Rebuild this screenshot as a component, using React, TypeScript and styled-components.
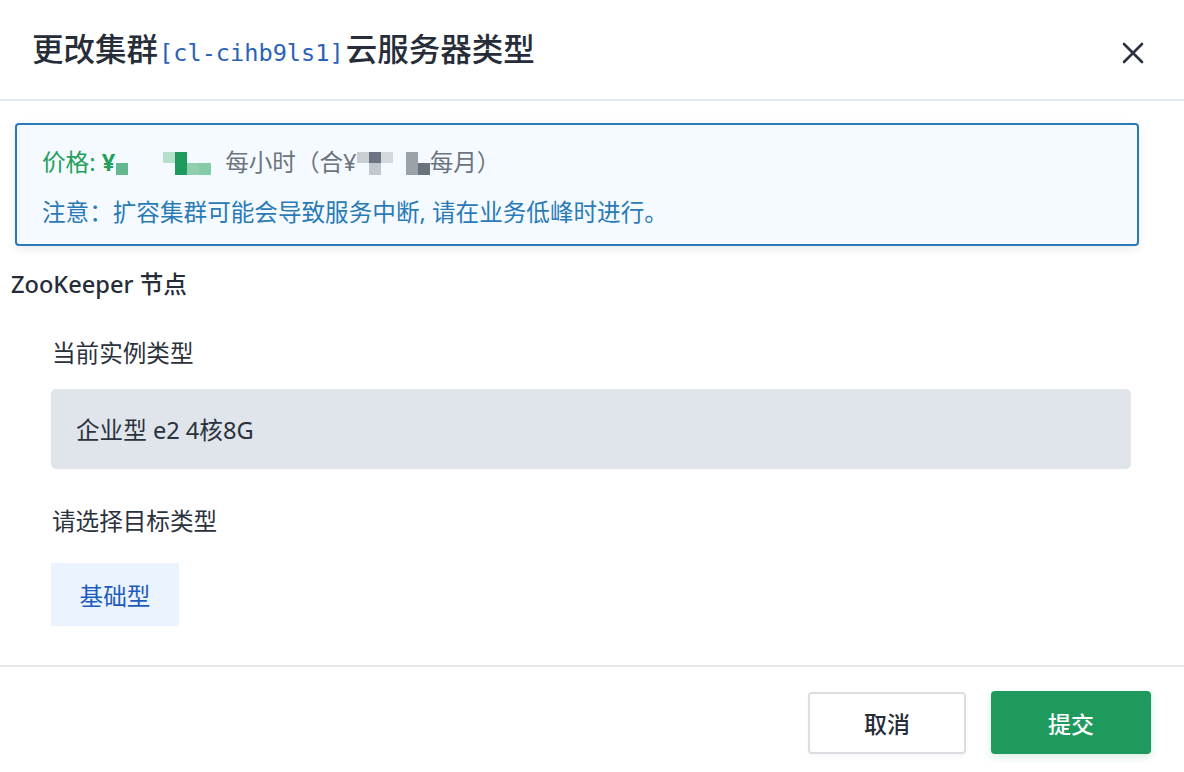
import React from 'react';
import styled, { createGlobalStyle } from 'styled-components';

const GlobalStyle = createGlobalStyle`
  html, body {
    margin: 0;
    padding: 0;
    background: #ffffff;
  }
  body {
    font-family: "Noto Sans", "Noto Sans CJK SC", sans-serif;
    color: #2b323d;
  }
`;

const Dialog = styled.div`
  width: 1184px;
  height: 772px;
  display: flex;
  flex-direction: column;
  background: #fff;
  overflow: hidden;
`;

const Header = styled.div`
  height: 101px;
  padding: 0 40px 0 32px;
  display: flex;
  align-items: center;
  justify-content: space-between;
  border-bottom: 2px solid #e3e8ec;
  box-sizing: border-box;
  flex-shrink: 0;
`;

const Title = styled.h1`
  margin: 0;
  font-size: 31.5px;
  font-weight: 500;
  line-height: 40px;
  color: #262d38;
  font-family: "Noto Sans CJK SC", sans-serif;
`;

const ClusterId = styled.span`
  font-family: "DejaVu Sans Mono", "Liberation Mono", monospace;
  font-size: 23.6px;
  font-weight: 400;
  color: #2a62b8;
  margin: 0 2px 0 1px;
`;

const CloseButton = styled.button`
  border: none;
  background: none;
  padding: 0;
  width: 22px;
  height: 22px;
  cursor: pointer;
  display: flex;
  margin-top: 6px;
`;

const Body = styled.div`
  flex: 1;
  padding: 22px 45px 0 11px;
`;

const Alert = styled.div`
  margin-left: 4px;
  height: 123px;
  box-sizing: border-box;
  border: 2px solid #2a7ab8;
  border-radius: 4px;
  background: #f4faff;
  box-shadow: 0 3px 8px rgba(30, 60, 90, 0.1);
  padding: 12px 25px 0;
  font-size: 23.6px;
`;

const AlertLine = styled.div<{ $color: string }>`
  height: 50px;
  line-height: 50px;
  color: ${p => p.$color};
  white-space: nowrap;
  display: flex;
  align-items: center;
`;

const Price = styled.span`
  color: #22a05a;
`;

const Yuan = styled.span`
  color: #22a05a;
  font-weight: 700;
`;

const Muted = styled.span`
  color: #6d747e;
`;

const Mosaic = styled.span<{ $cols: number; $left: number; $right: number }>`
  display: inline-grid;
  grid-template-columns: repeat(${p => p.$cols}, 12px);
  grid-template-rows: 11px 12px;
  grid-auto-flow: column;
  margin: 2px ${p => p.$right}px 0 ${p => p.$left}px;
`;

const Cell = styled.span<{ $c: string }>`
  background: ${p => p.$c};
`;

const SectionTitle = styled.div`
  margin-top: 21px;
  line-height: 34px;
  font-size: 23.6px;
  font-weight: 500;
  color: #262d38;
`;

const Field = styled.div`
  padding: 0 8px 0 40px;
`;

const Label = styled.div`
  margin-top: 35px;
  padding-left: 1px;
  line-height: 34px;
  font-size: 23.6px;
  color: #2b323d;
`;

const ReadonlyBox = styled.div`
  margin-top: 19px;
  height: 80px;
  padding-left: 25px;
  display: flex;
  align-items: center;
  background: #dfe5eb;
  border-radius: 5px;
  font-size: 23.6px;
  color: #2b323d;
`;

const Options = styled.div`
  margin-top: 25px;
  display: flex;
  gap: 12px;
`;

const OptionTile = styled.div<{ $active?: boolean }>`
  width: 128px;
  height: 63px;
  display: flex;
  align-items: center;
  justify-content: center;
  background: ${p => (p.$active ? '#eaf3fe' : '#f4f6f8')};
  color: ${p => (p.$active ? '#1e5bbf' : '#2b323d')};
  font-size: 23.6px;
`;

const Footer = styled.div`
  height: 107px;
  flex-shrink: 0;
  border-top: 2px solid #e5e8eb;
  box-sizing: border-box;
  display: flex;
  justify-content: flex-end;
  align-items: flex-start;
  gap: 25px;
  padding: 24px 33px 0 0;
`;

const Button = styled.button<{ $primary?: boolean }>`
  width: ${p => (p.$primary ? 160 : 158)}px;
  height: ${p => (p.$primary ? 63 : 62)}px;
  border-radius: 4px;
  font-family: "Noto Sans CJK SC", sans-serif;
  font-size: 23px;
  font-weight: 500;
  cursor: pointer;
  border: ${p => (p.$primary ? 'none' : '2px solid #dadee4')};
  background: ${p => (p.$primary ? '#1e9a5e' : '#fff')};
  color: ${p => (p.$primary ? '#fff' : '#262d38')};
  box-shadow: ${p => (p.$primary ? '0 3px 8px rgba(30,154,94,0.18)' : '0 2px 4px rgba(0,0,0,0.04)')};
  margin-top: ${p => (p.$primary ? 0 : 1)}px;
`;

type Blocks = string[][];

const Pixels: React.FC<{ blocks: Blocks; left?: number; right?: number }> = ({ blocks, left = 0, right = 0 }) => (
  <Mosaic $cols={blocks.length} $left={left} $right={right}>
    {blocks.flatMap((col, i) => col.map((c, j) => <Cell key={`${i}-${j}`} $c={c} />))}
  </Mosaic>
);

const T = 'transparent';

const App: React.FC = () => {
  return (
    <>
      <GlobalStyle />
      <Dialog>
        <Header>
          <Title>
            更改集群<ClusterId>[cl-cihb9ls1]</ClusterId>云服务器类型
          </Title>
          <CloseButton aria-label="关闭">
            <svg width="22" height="22" viewBox="0 0 22 22">
              <path d="M2 2 L20 20 M20 2 L2 20" stroke="#2b3240" strokeWidth="2.6" strokeLinecap="round" />
            </svg>
          </CloseButton>
        </Header>

        <Body>
          <Alert>
            <AlertLine $color="#22a05a">
              <Price>价格: </Price>
              <Yuan>&nbsp;¥</Yuan>
              <Pixels blocks={[[T, '#63b98d']]} left={1} right={35} />
              <Pixels
                blocks={[
                  ['#b5e0c9', T],
                  ['#1e9a5e', '#1e9a5e'],
                  [T, '#8fcfae'],
                  [T, '#86cba8'],
                ]}
                right={14}
              />
              <Muted>每小时（合¥</Muted>
              <Pixels
                blocks={[
                  ['#c9ced4', T],
                  ['#6b7480', '#c3c8ce'],
                  ['#d4d8dd', T],
                ]}
                right={13}
              />
              <Pixels blocks={[['#9ba2aa', '#9ba2aa'], [T, '#69737e']]} />
              <Muted>每月）</Muted>
            </AlertLine>
            <AlertLine $color="#2a7ab8">注意：扩容集群可能会导致服务中断, 请在业务低峰时进行。</AlertLine>
          </Alert>

          <SectionTitle>ZooKeeper 节点</SectionTitle>

          <Field>
            <Label>当前实例类型</Label>
            <ReadonlyBox>企业型 e2 4核8G</ReadonlyBox>
            <Label>请选择目标类型</Label>
            <Options>
              <OptionTile $active>基础型</OptionTile>
            </Options>
          </Field>
        </Body>

        <Footer>
          <Button>取消</Button>
          <Button $primary>提交</Button>
        </Footer>
      </Dialog>
    </>
  );
};

export default App;
